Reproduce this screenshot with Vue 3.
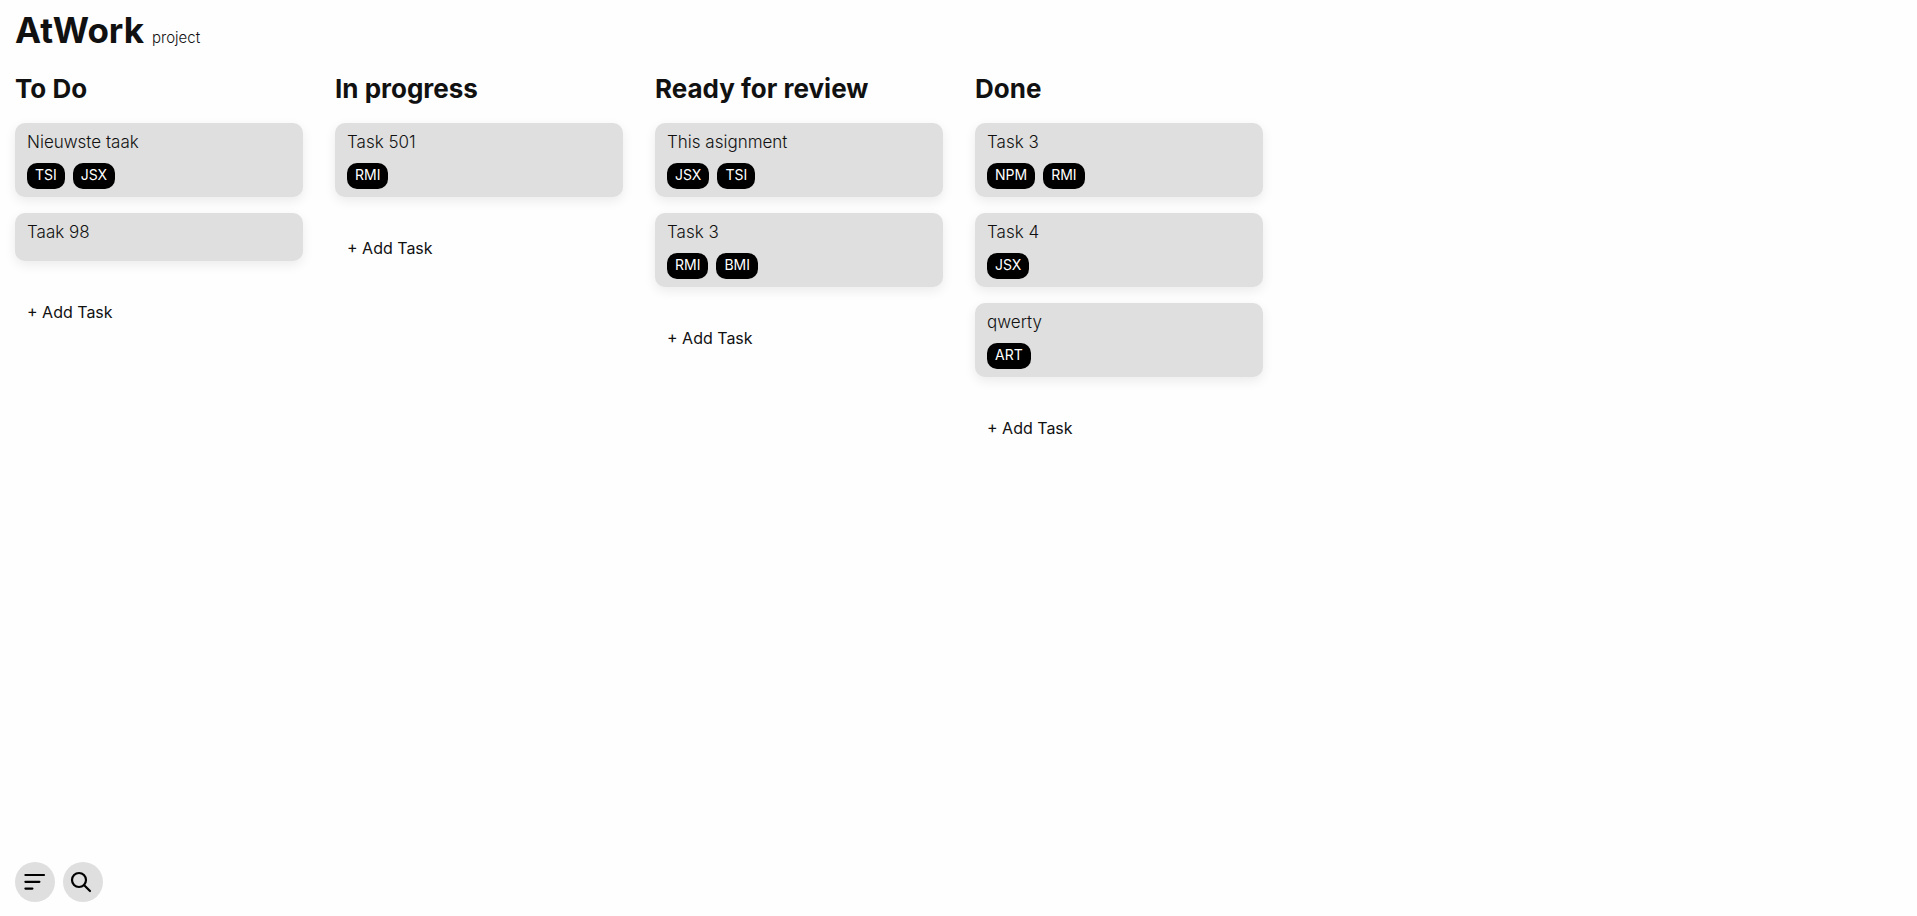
<script setup>
import { ref } from 'vue'

const columns = ref([
  {
    name: 'To Do',
    tasks: [
      { title: 'Nieuwste taak', tags: ['TSI', 'JSX'] },
      { title: 'Taak 98', tags: [] },
    ],
  },
  { name: 'In progress', tasks: [{ title: 'Task 501', tags: ['RMI'] }] },
  {
    name: 'Ready for review',
    tasks: [
      { title: 'This asignment', tags: ['JSX', 'TSI'] },
      { title: 'Task 3', tags: ['RMI', 'BMI'] },
    ],
  },
  {
    name: 'Done',
    tasks: [
      { title: 'Task 3', tags: ['NPM', 'RMI'] },
      { title: 'Task 4', tags: ['JSX'] },
      { title: 'qwerty', tags: ['ART'] },
    ],
  },
])
</script>

<template>
  <div class="page">
    <header class="header">
      <h1 class="brand">AtWork</h1>
      <span class="subtitle">project</span>
    </header>

    <main class="board">
      <section v-for="column in columns" :key="column.name" class="column">
        <h2 class="column-name">{{ column.name }}</h2>
        <ul class="tasks">
          <li v-for="(task, i) in column.tasks" :key="i" class="card">
            <h3 class="card-title">{{ task.title }}</h3>
            <div class="tags">
              <span v-for="tag in task.tags" :key="tag" class="tag">{{ tag }}</span>
            </div>
          </li>
        </ul>
        <button type="button" class="add">+ Add Task</button>
      </section>
    </main>

    <footer class="tools">
      <button type="button" class="round" aria-label="Filter">
        <svg viewBox="0 0 40 40" width="40" height="40" fill="none" stroke="currentColor" stroke-width="2.2" stroke-linecap="round">
          <path d="M10.4 13H29M10.4 19.8H24.4M10.4 26.6H17.4" />
        </svg>
      </button>
      <button type="button" class="round" aria-label="Search">
        <svg viewBox="0 0 40 40" width="40" height="40" fill="none" stroke="currentColor" stroke-width="2.2" stroke-linecap="round">
          <circle cx="16" cy="18" r="7" />
          <path d="M21.2 23.2L27 29" />
        </svg>
      </button>
    </footer>
  </div>
</template>

<style>
body {
  margin: 0;
  background: #fefefe;
}
</style>

<style scoped>
.page {
  box-sizing: border-box;
  display: flex;
  flex-direction: column;
  min-height: 100vh;
  padding: 10px 15px 14px;
  font-family: Inter, "Open Sans", sans-serif;
  font-size: 16px;
  line-height: 24px;
  color: #111;
}

.header {
  display: flex;
  align-items: baseline;
  gap: 8px;
}

.brand {
  margin: 0;
  font-size: 35px;
  line-height: 40px;
  font-weight: 700;
}

.subtitle {
  font-size: 15px;
  font-weight: 300;
}

.board {
  display: flex;
  align-items: flex-start;
  gap: 32px;
  margin-top: 23px;
}

.column {
  flex: 0 1 288px;
  min-width: 0;
}

.column-name {
  margin: 0 0 18px;
  font-size: 26px;
  line-height: 32px;
  font-weight: 700;
}

.tasks {
  display: flex;
  flex-direction: column;
  gap: 16px;
  margin: 0 0 32px;
  padding: 0;
  list-style: none;
}

.card {
  padding: 7px 12px 8px;
  border-radius: 10px;
  background: #dfdfdf;
  box-shadow: 0 4px 12px rgba(0, 0, 0, 0.08);
}

.card-title {
  margin: 0 0 9px;
  font-size: 17px;
  line-height: 24px;
  font-weight: 300;
}

.tags {
  display: flex;
  flex-wrap: wrap;
  gap: 8px;
}

.tag {
  padding: 0 8px 2px;
  border-radius: 10px;
  background: #000;
  color: #fff;
  font-size: 14px;
  line-height: 24px;
}

.add {
  padding: 7px 12px;
  border: 0;
  background: none;
  color: inherit;
  font: inherit;
}

.tools {
  display: flex;
  gap: 8px;
  margin-top: auto;
}

.round {
  width: 40px;
  height: 40px;
  padding: 0;
  border: 0;
  border-radius: 50%;
  background: #dfdfdf;
  color: #000;
}

.round svg {
  display: block;
}
</style>
